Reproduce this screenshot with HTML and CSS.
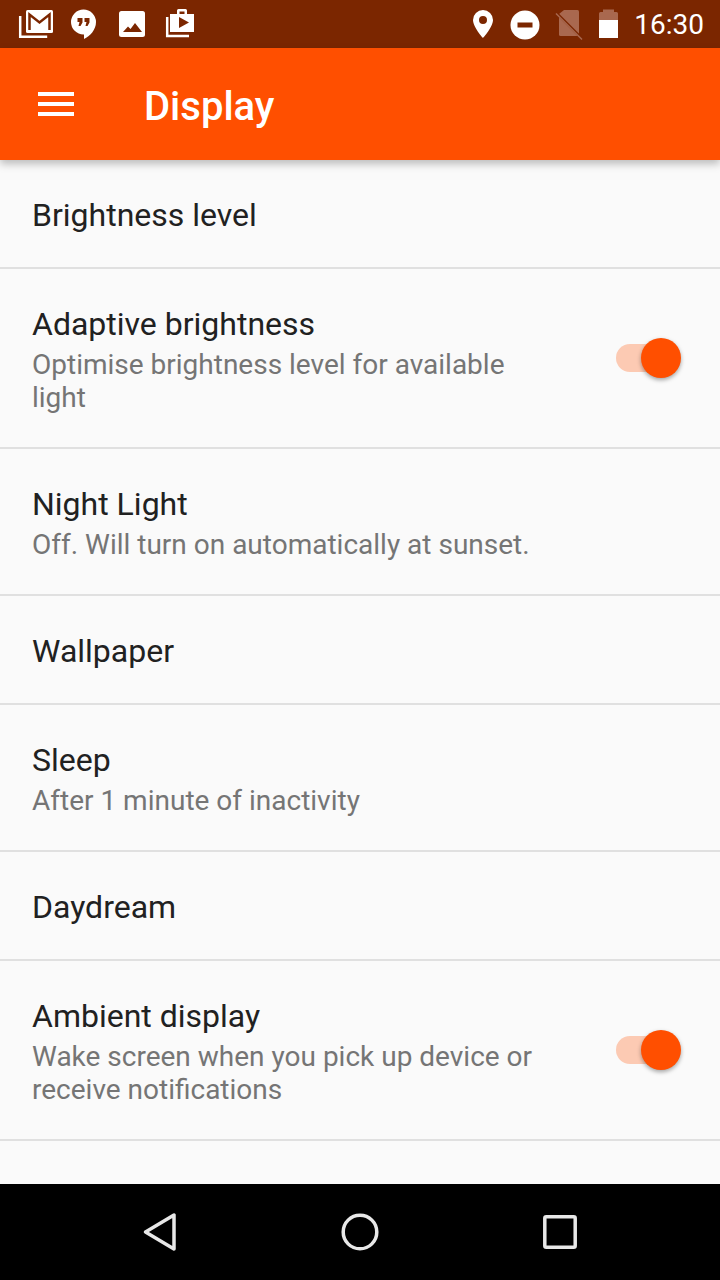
FILE: index.html
```html
<!DOCTYPE html>
<html lang="en">
<head>
  <meta charset="UTF-8">
  <meta name="viewport" content="width=device-width, initial-scale=1.0">
  <title>Display</title>
  <link rel="stylesheet" href="styles.css">
</head>
<body>
  <div class="tela">
    <div class="status-bar">
      <div class="status-esq">
        <svg width="48" height="48" viewBox="0 0 48 48"><path fill="none" stroke="#fff" stroke-width="2.500" d="M8.200 16v20.700h27"/><rect x="14" y="10" width="27" height="23" rx="1.500" fill="#fff"/><path fill="none" stroke="#7b2600" stroke-width="2.500" d="M17.500 30V14.500l10 8 10-8V30"/></svg>
        <svg width="48" height="48" viewBox="0 0 48 48"><path fill="#fff" d="M23.500 9.500a12.500 12.500 0 0 0 0 25H24V39c6-3 12-9 12-17A12.500 12.500 0 0 0 23.500 9.500z"/><path fill="#7b2600" d="M17.500 18h5v4.500l-2 3.500h-2l1-4h-2zM24.500 18h5v4.500l-2 3.500h-2l1-4h-2z"/></svg>
        <svg width="48" height="48" viewBox="0 0 48 48"><rect x="11" y="11" width="26" height="26" rx="2.500" fill="#fff"/><path fill="#7b2600" d="M15 32l5-5.500 2.500 2.500 4.500-6 7 9z"/></svg>
        <svg width="48" height="48" viewBox="0 0 48 48"><path fill="none" stroke="#fff" stroke-width="2.500" d="M11.200 17v19h21.800"/><path fill="#fff" fill-rule="evenodd" d="M14 14h7v-3.500a1.500 1.500 0 0 1 1.500-1.500h7a1.500 1.500 0 0 1 1.500 1.500V14h7v18H14zM23.500 11.500V14h5v-2.500z"/><path fill="#7b2600" d="M23 17l10 5.500-10 5.500z"/></svg>
      </div>
      <div class="status-dir">
        <svg width="30" height="48" viewBox="0 0 30 48"><path fill="#fff" fill-rule="evenodd" d="M15 10A10 10 0 0 0 5 20c0 7 10 18 10 18s10-11 10-18a10 10 0 0 0-10-10zm0 6a4 4 0 1 1 0 8 4 4 0 0 1 0-8z"/></svg>
        <svg width="30" height="48" viewBox="0 0 30 48"><circle cx="15" cy="25" r="14.500" fill="#fff"/><rect x="7.500" y="22.500" width="15" height="5" fill="#7b2600"/></svg>
        <svg width="34" height="48" viewBox="0 0 34 48"><path fill="#a9684f" d="M7 14v20.500a1.500 1.500 0 0 0 1.500 1.500h17a1.500 1.500 0 0 0 1.500-1.500v-23a1.500 1.500 0 0 0-1.500-1.500H12z"/><path stroke="#7b2600" stroke-width="2.500" d="M3 11.500l27 27"/><path stroke="#a9684f" stroke-width="1.500" d="M4 13.500l26 26"/></svg>
        <svg width="24" height="48" viewBox="0 0 24 48"><path fill="#a9684f" d="M5 9.500h11V12h2.500a1.500 1.500 0 0 1 1.500 1.500V20H1v-6.500A1.500 1.500 0 0 1 2.500 12H5z"/><path fill="#fff" d="M1 20h19v18H1z"/></svg>
        <span class="hora">16:30</span>
      </div>
    </div>

    <header class="app-bar">
      <div class="menu-icone"><span></span><span></span><span></span></div>
      <h1>Display</h1>
    </header>

    <main class="lista">
      <div class="item item-simples"><div class="textos"><h2>Brightness level</h2></div></div>
      <div class="item item-alto">
        <div class="textos">
          <h2>Adaptive brightness</h2>
          <p>Optimise brightness level for available light</p>
        </div>
        <div class="toggle"><span class="trilho"></span><span class="bolinha"></span></div>
      </div>
      <div class="item">
        <div class="textos textos-largo">
          <h2>Night Light</h2>
          <p>Off. Will turn on automatically at sunset.</p>
        </div>
      </div>
      <div class="item item-simples"><div class="textos"><h2>Wallpaper</h2></div></div>
      <div class="item">
        <div class="textos">
          <h2>Sleep</h2>
          <p>After 1 minute of inactivity</p>
        </div>
      </div>
      <div class="item item-simples"><div class="textos"><h2>Daydream</h2></div></div>
      <div class="item item-alto">
        <div class="textos">
          <h2>Ambient display</h2>
          <p>Wake screen when you pick up device or receive notifications</p>
        </div>
        <div class="toggle"><span class="trilho"></span><span class="bolinha"></span></div>
      </div>
    </main>

    <nav class="nav-bar">
      <svg width="40" height="40" viewBox="0 0 40 40"><path fill="none" stroke="#e8e8e8" stroke-width="3.500" stroke-linejoin="round" d="M34 3v34L5.500 20z"/></svg>
      <svg width="40" height="40" viewBox="0 0 40 40"><circle cx="20" cy="20" r="16.800" fill="none" stroke="#e8e8e8" stroke-width="3.500"/></svg>
      <svg width="40" height="40" viewBox="0 0 40 40"><rect x="4.800" y="4.800" width="30.400" height="30.400" rx="1.500" fill="none" stroke="#e8e8e8" stroke-width="3.500"/></svg>
    </nav>
  </div>
</body>
</html>
```

FILE: styles.css
```css
* {
  margin: 0;
  padding: 0;
  box-sizing: border-box;
}

body {
  font-family: Roboto, sans-serif;
  background-color: #fafafa;
  color: #212121;
}

.tela {
  width: 720px;
  height: 1280px;
  display: flex;
  flex-direction: column;
  overflow: hidden;
}

.status-bar {
  height: 48px;
  background-color: #7b2600;
  display: flex;
  justify-content: space-between;
  align-items: center;
  padding: 0 16px 0 12px;
}

.status-esq,
.status-dir {
  display: flex;
  align-items: center;
}

.status-dir {
  gap: 12px;
}

.hora {
  color: #fff;
  font-size: 28px;
}

.app-bar {
  height: 112px;
  background-color: #ff4f00;
  color: #fff;
  display: flex;
  align-items: center;
  padding-left: 38px;
  box-shadow: 0 4px 8px rgba(0, 0, 0, 0.25);
  position: relative;
}

.app-bar h1 {
  font-size: 40px;
  font-weight: 500;
  margin-left: 70px;
  padding-top: 4px;
}

.menu-icone {
  width: 36px;
  display: flex;
  flex-direction: column;
  gap: 6px;
}

.menu-icone span {
  height: 4px;
  background-color: #fff;
}

.lista {
  flex: 1;
  overflow: hidden;
}

.item {
  display: flex;
  align-items: flex-start;
  justify-content: space-between;
  padding: 0 32px;
  height: 147px;
  border-bottom: 2px solid #e0e0e0;
}

.item-simples {
  height: 109px;
}

.item-alto {
  height: 180px;
}

.textos {
  width: 510px;
  padding-top: 35px;
}

.textos-largo {
  width: 600px;
}

.textos h2 {
  font-size: 32px;
  font-weight: 400;
  line-height: 40px;
  color: #212121;
}

.textos p {
  font-size: 28px;
  line-height: 33px;
  margin-top: 4px;
  color: #757575;
}

.toggle {
  width: 72px;
  height: 44px;
  position: relative;
  align-self: center;
}

.trilho {
  position: absolute;
  left: 0;
  top: 8px;
  width: 56px;
  height: 28px;
  border-radius: 14px;
  background-color: #fccab3;
}

.bolinha {
  position: absolute;
  right: 7px;
  top: 2px;
  width: 40px;
  height: 40px;
  border-radius: 50%;
  background-color: #ff4f00;
  box-shadow: 0 2px 4px rgba(0, 0, 0, 0.35);
}

.nav-bar {
  height: 96px;
  background-color: #000;
  display: flex;
  align-items: center;
  padding: 0 140px;
  justify-content: space-between;
}
```
